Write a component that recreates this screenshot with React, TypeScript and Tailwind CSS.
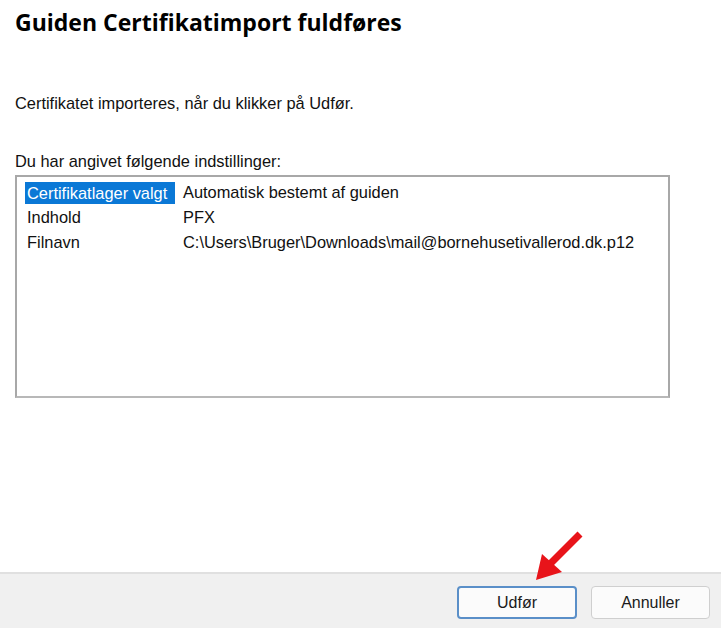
import React from 'react';

const rows = [
  { label: 'Certifikatlager valgt', value: 'Automatisk bestemt af guiden', selected: true },
  { label: 'Indhold', value: 'PFX' },
  { label: 'Filnavn', value: 'C:\\Users\\Bruger\\Downloads\\mail@bornehusetivallerod.dk.p12' },
];

export default function App() {
  return (
    <div
      className="w-[721px] h-[628px] flex flex-col bg-white text-[#111] overflow-hidden"
      style={{ fontFamily: '"Liberation Sans", Arial, sans-serif' }}
    >
      {/* Indhold */}
      <div className="flex-1 flex flex-col pl-[15px] pr-[51px]">
        <h1
          className="mt-[7px] text-[23px] font-bold leading-[30px] text-black"
          style={{ fontFamily: '"Open Sans", sans-serif' }}
        >
          Guiden Certifikatimport fuldføres
        </h1>

        <p className="mt-[57px] text-[16.4px] leading-[19px]">
          Certifikatet importeres, når du klikker på Udfør.
        </p>

        <p className="mt-[39px] text-[16.4px] leading-[19px]">Du har angivet følgende indstillinger:</p>

        <div className="mt-[4px] h-[223px] border-2 border-[#a8a8a8] border-b-[#b8b8b8] bg-white pt-[3px] pl-[8px]">
          {rows.map((r) => (
            <div key={r.label} className="flex h-[25px] items-center text-[16.4px]">
              <div className="w-[158px] flex">
                <span
                  className={
                    r.selected
                      ? 'bg-[#0a78d6] text-white px-[2px] h-[22px] leading-[22px] w-[150px] whitespace-nowrap'
                      : 'px-[2px]'
                  }
                >
                  {r.label}
                </span>
              </div>
              <span className="whitespace-nowrap">{r.value}</span>
            </div>
          ))}
        </div>
      </div>

      {/* Knapper */}
      <div className="relative h-[56px] bg-[#f0f0f0] border-t-2 border-[#e0e0e0] flex items-start justify-end gap-[14px] pt-[12px] pr-[11px]">
        <svg
          className="absolute left-[530px] top-[-44px]"
          width="56"
          height="56"
          viewBox="0 0 56 56"
        >
          <line x1="50" y1="4" x2="20" y2="34" stroke="#e8141a" strokeWidth="7" strokeLinecap="butt" />
          <polygon points="6,50 12,24 32,42" fill="#e8141a" />
        </svg>
        <button className="w-[120px] h-[33px] rounded-[4px] border-2 border-[#5a8fc8] bg-[#fbfbfb] text-[16px] text-[#1a1a1a]">
          Udfør
        </button>
        <button className="w-[119px] h-[33px] rounded-[4px] border border-[#cfcfcf] bg-[#fbfbfb] text-[16px] text-[#1a1a1a]">
          Annuller
        </button>
      </div>
    </div>
  );
}
